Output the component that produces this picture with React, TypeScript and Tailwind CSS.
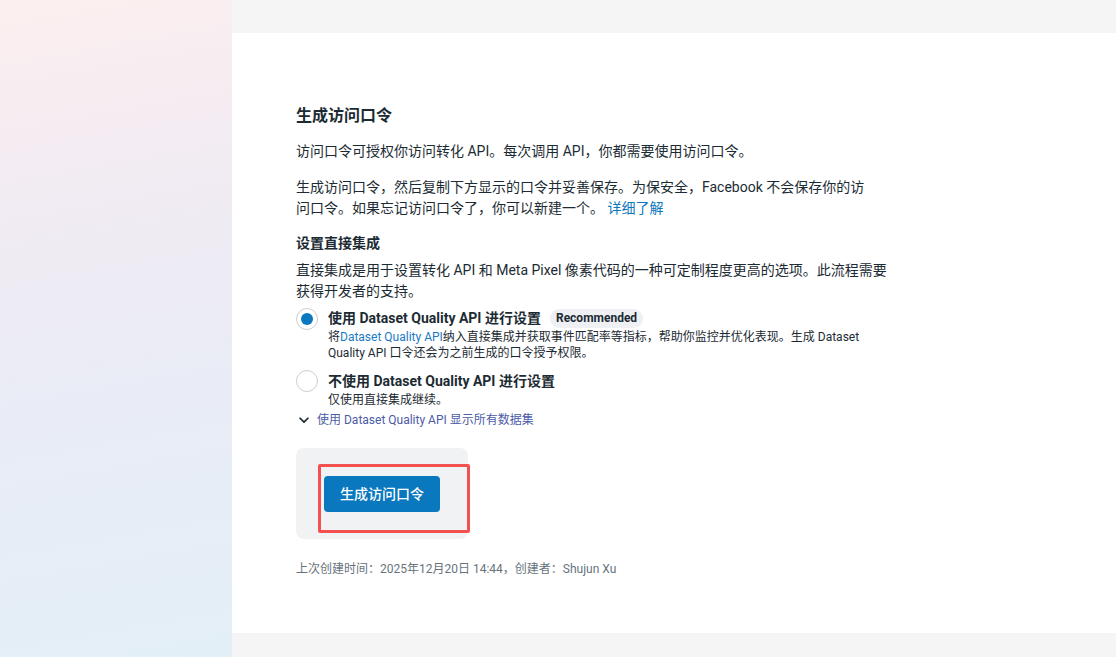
import React from "react";

const font = { fontFamily: 'Roboto, "Noto Sans CJK SC", "Noto Sans", sans-serif' };

function Radio({ checked }: { checked?: boolean }) {
  return (
    <div className="w-[22px] h-[22px] shrink-0 rounded-full border border-[#c9cfd6] bg-white flex items-center justify-center">
      {checked && <div className="w-[12px] h-[12px] rounded-full bg-[#0a78be]" />}
    </div>
  );
}

export default function App() {
  return (
    <div className="w-[1116px] h-[657px] flex overflow-hidden text-[#1c2b33]" style={font}>
      <div className="w-[232px] h-full shrink-0 bg-[linear-gradient(170deg,#fcefef_0%,#f1ebf3_30%,#e9ecf6_60%,#e3eff7_100%)]" />
      <div className="flex-1 h-full bg-[#f5f5f5] pt-[33px]">
        <div className="bg-white h-[600px] pl-[64px] pt-[73px]">
          <div className="text-[16px] leading-[20px] font-bold">生成访问口令</div>
          <p className="mt-[15px] text-[14px] leading-[21px] whitespace-nowrap">
            访问口令可授权你访问转化 API。每次调用 API，你都需要使用访问口令。
          </p>
          <p className="mt-[15px] text-[14px] leading-[21px] whitespace-nowrap">
            生成访问口令，然后复制下方显示的口令并妥善保存。为保安全，Facebook 不会保存你的访
            <br />
            问口令。如果忘记访问口令了，你可以新建一个。 <span className="text-[#0a78be]">详细了解</span>
          </p>
          <div className="mt-[14px] text-[14px] leading-[21px] font-bold">设置直接集成</div>
          <p className="mt-[6px] text-[14px] leading-[21px] whitespace-nowrap">
            直接集成是用于设置转化 API 和 Meta Pixel 像素代码的一种可定制程度更高的选项。此流程需要
            <br />
            获得开发者的支持。
          </p>
          <div className="mt-[6px] flex gap-[10px]">
            <Radio checked />
            <div>
              <div className="flex items-center h-[20px]">
                <span className="text-[14px] leading-[20px] font-bold">使用 Dataset Quality API 进行设置</span>
                <span className="ml-[9px] h-[19px] px-[6px] rounded-full bg-[#eef0f3] text-[12px] leading-[19px] font-bold">Recommended</span>
              </div>
              <p className="mt-[1px] text-[12px] leading-[16px] whitespace-nowrap">
                将<span className="text-[#1a7ac4]">Dataset Quality API</span>纳入直接集成并获取事件匹配率等指标，帮助你监控并优化表现。生成 Dataset
                <br />
                Quality API 口令还会为之前生成的口令授予权限。
              </p>
            </div>
          </div>
          <div className="mt-[9px] flex gap-[10px]">
            <Radio />
            <div className="pt-[1px]">
              <div className="text-[14px] leading-[20px] font-bold">不使用 Dataset Quality API 进行设置</div>
              <p className="mt-[1px] text-[12px] leading-[16px]">仅使用直接集成继续。</p>
            </div>
          </div>
          <div className="mt-[4px] flex items-center gap-[6px] text-[12px] leading-[16px] text-[#4b5ba6]">
            <svg width="14" height="14" viewBox="0 0 16 16" className="ml-[1px]">
              <path d="M3.5 6 L8 10.5 L12.5 6" fill="none" stroke="#1c2b33" strokeWidth="2" strokeLinecap="round" strokeLinejoin="round" />
            </svg>
            <span>使用 Dataset Quality API 显示所有数据集</span>
          </div>
          <div className="relative mt-[20px] w-[172px] h-[91px] rounded-[8px] bg-[#f1f2f4] pl-[28px] pt-[28px]">
            <button className="w-[116px] h-[36px] rounded-[4px] bg-[#0a78be] text-white text-[14px] font-medium">
              生成访问口令
            </button>
            <div className="absolute left-[22px] top-[16px] w-[152px] h-[69px] border-[3px] border-[#f35050] rounded-[2px]" />
          </div>
          <p className="mt-[22px] text-[12px] leading-[16px] text-[#67737c]">
            上次创建时间：2025年12月20日 14:44，创建者：Shujun Xu
          </p>
        </div>
      </div>
    </div>
  );
}
